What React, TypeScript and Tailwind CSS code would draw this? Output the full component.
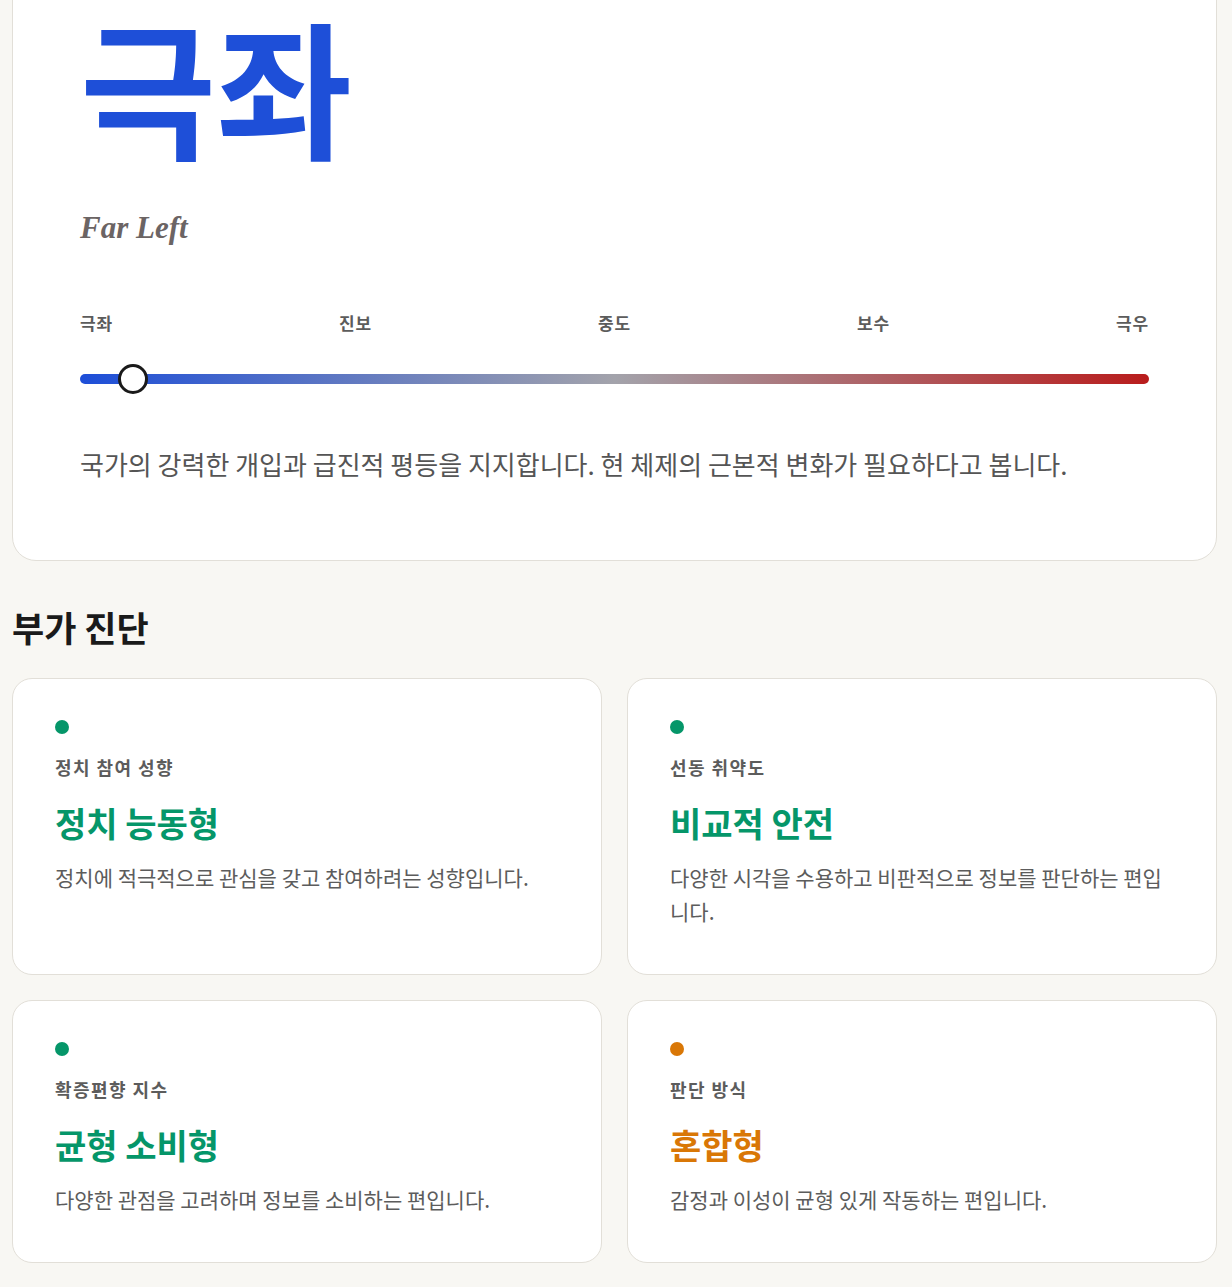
const sans = { fontFamily: '"Noto Sans CJK KR", "Noto Sans", sans-serif' };

type Diagnosis = {
  label: string;
  title: string;
  desc: string;
  tone: "green" | "amber";
};

const diagnoses: Diagnosis[] = [
  { label: "정치 참여 성향", title: "정치 능동형", desc: "정치에 적극적으로 관심을 갖고 참여하려는 성향입니다.", tone: "green" },
  { label: "선동 취약도", title: "비교적 안전", desc: "다양한 시각을 수용하고 비판적으로 정보를 판단하는 편입니다.", tone: "green" },
  { label: "확증편향 지수", title: "균형 소비형", desc: "다양한 관점을 고려하며 정보를 소비하는 편입니다.", tone: "green" },
  { label: "판단 방식", title: "혼합형", desc: "감정과 이성이 균형 있게 작동하는 편입니다.", tone: "amber" },
];

const scale = ["극좌", "진보", "중도", "보수", "극우"];

function DiagnosisCard({ item }: { item: Diagnosis }) {
  const green = item.tone === "green";
  return (
    <div className="rounded-[20px] border border-[#e2dfd8] bg-white px-[42px] pt-[41px] pb-[46px]">
      <div className={green ? "h-[14px] w-[14px] rounded-full bg-[#059669]" : "h-[14px] w-[14px] rounded-full bg-[#d97706]"} />
      <p className="mt-[20px] text-[18px] font-bold tracking-[0.08em] text-[#5c5c5c]">{item.label}</p>
      <h3 className={green ? "mt-[20px] text-[34px] font-bold leading-[1.3] text-[#059669]" : "mt-[20px] text-[34px] font-bold leading-[1.3] text-[#d97706]"}>
        {item.title}
      </h3>
      <p className="mt-[15px] text-[21px] leading-[34px] text-[#5c5c5c]">{item.desc}</p>
    </div>
  );
}

export default function App() {
  return (
    <div className="min-h-screen overflow-hidden bg-[#f8f7f3] pl-3 pr-[15px] pb-[25px]" style={sans}>
      <section className="-mt-[57px] rounded-[24px] border border-[#e2dfd8] bg-white px-[67px] pt-[66px] pb-[77px]">
        <h1 className="text-[148px] font-bold leading-none text-[#1e4fd8]">극좌</h1>
        <p className="mt-[47px] text-[31px] font-bold italic text-[#6b6464]" style={{ fontFamily: '"Liberation Serif", serif' }}>
          Far Left
        </p>
        <div className="mt-[58px] flex justify-between text-[17px] font-bold tracking-[0.05em] text-[#5c5c5c]">
          {scale.map((s) => (
            <span key={s}>{s}</span>
          ))}
        </div>
        <div className="relative mt-[39px] h-[10px] rounded-full bg-[linear-gradient(to_right,#1d4ed8,#a3a3ab,#b91c1c)]">
          <div className="absolute left-[5%] top-1/2 h-[30px] w-[30px] -translate-x-1/2 -translate-y-1/2 rounded-full border-[3px] border-[#1a1a1a] bg-white" />
        </div>
        <p className="mt-[60px] text-[26px] text-[#555]">국가의 강력한 개입과 급진적 평등을 지지합니다. 현 체제의 근본적 변화가 필요하다고 봅니다.</p>
      </section>

      <h2 className="mt-[40px] text-[35px] font-bold text-[#1a1a1a]">부가 진단</h2>

      <div className="mt-[24px] grid grid-cols-2 gap-[25px]">
        {diagnoses.map((d) => (
          <DiagnosisCard key={d.label} item={d} />
        ))}
      </div>
    </div>
  );
}
